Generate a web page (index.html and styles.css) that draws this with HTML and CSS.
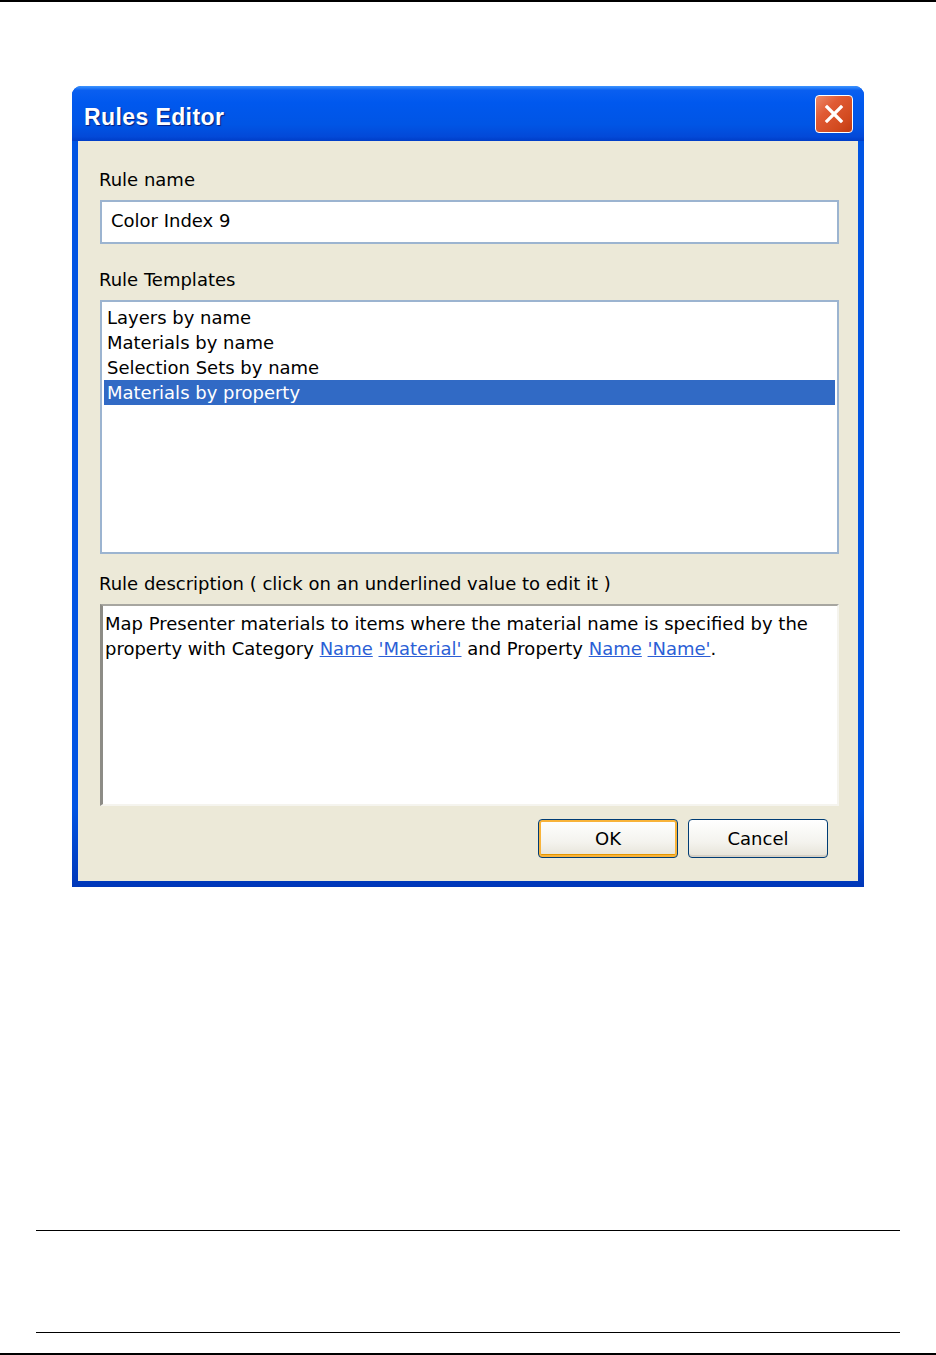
FILE: index.html
```html
<!DOCTYPE html>
<html lang="en">
<head>
    <meta charset="UTF-8">
    <meta name="viewport" content="width=device-width, initial-scale=1.0">
    <title>Rules Editor</title>
    <link rel="stylesheet" href="styles.css">
</head>
<body>
    <div class="page-top"></div>

    <div class="dialog">
        <div class="titlebar">
            <span class="title">Rules Editor</span>
            <button class="close-btn" aria-label="Close">
                <svg width="22" height="22" viewBox="0 0 22 22">
                    <path d="M4 4 L18 18 M18 4 L4 18" stroke="#fff" stroke-width="3.2" stroke-linecap="square"/>
                </svg>
            </button>
        </div>
        <div class="dialog-body">
            <div class="label">Rule name</div>
            <div class="textbox">Color Index 9</div>

            <div class="label label-gap">Rule Templates</div>
            <ul class="listbox">
                <li>Layers by name</li>
                <li>Materials by name</li>
                <li>Selection Sets by name</li>
                <li class="selected">Materials by property</li>
            </ul>

            <div class="label label-gap-small">Rule description ( click on an underlined value to edit it )</div>
            <div class="description">
                Map Presenter materials to items where the material name is specified by the<br>
                property with Category <a href="#">Name</a> <a href="#">'Material'</a> and Property <a href="#">Name</a> <a href="#">'Name'</a>.
            </div>

            <div class="buttons">
                <button class="btn btn-default">OK</button>
                <button class="btn">Cancel</button>
            </div>
        </div>
    </div>

    <div class="page-footer"></div>
    <div class="page-bottom"></div>
</body>
</html>
```

FILE: styles.css
```css
body {
    margin: 0;
    background: #fff;
    font-family: "DejaVu Sans", Verdana, sans-serif;
    height: 1355px;
    overflow: hidden;
}
.page-top {
    height: 2px;
    background: #000;
}
.dialog {
    margin: 84px 0 0 72px;
    width: 792px;
    background: linear-gradient(to bottom, #0054e3 0%, #0054e3 90%, #0037b8 100%);
    border-radius: 9px 9px 0 0;
    overflow: hidden;
}
.titlebar {
    height: 55px;
    display: flex;
    align-items: center;
    justify-content: space-between;
    padding: 0 11px 0 12px;
    background: linear-gradient(to bottom, #3d95ff 0%, #0a5ff0 8%, #0058ee 30%, #0055e5 70%, #0349d8 92%, #003dc7 100%);
}
.title {
    padding-top: 8px;
    color: #fff;
    font-family: "Liberation Sans", Arial, sans-serif;
    font-weight: bold;
    font-size: 23px;
    letter-spacing: 0.4px;
    text-shadow: 1px 1px 1px #0a1e7a;
}
.close-btn {
    width: 38px;
    height: 38px;
    padding: 0;
    border: 1.5px solid #fff;
    border-radius: 4px;
    background: linear-gradient(135deg, #ec8a6a 0%, #e05a34 35%, #d24a1f 75%, #c03a12 100%);
    display: flex;
    align-items: center;
    justify-content: center;
}
.dialog-body {
    margin: 0 6px 6px 6px;
    background: #ece9d8;
    padding: 26px 19px 23px 21px;
    color: #000;
    font-size: 18px;
}
.label {
    line-height: 26px;
    height: 24px;
    white-space: nowrap;
}
.label-gap {
    margin-top: 23px;
}
.label-gap-small {
    margin-top: 17px;
}
.textbox {
    margin: 9px 0 0 1px;
    height: 44px;
    box-sizing: border-box;
    border: 2px solid #9cb4d0;
    background: #fff;
    padding: 0 9px;
    line-height: 38px;
}
.listbox {
    list-style: none;
    margin: 9px 0 0 1px;
    padding: 3px 2px;
    height: 254px;
    box-sizing: border-box;
    border: 2px solid #9cb4d0;
    background: #fff;
}
.listbox li {
    height: 25px;
    line-height: 25px;
    padding-left: 3px;
}
.listbox li.selected {
    background: #316ac5;
    color: #fff;
}
.description {
    margin: 9px 0 0 1px;
    height: 202px;
    box-sizing: border-box;
    border-top: 2px solid #a7a6a0;
    border-left: 3px solid #8d8c86;
    border-right: 2px solid #f5f4ee;
    border-bottom: 2px solid #f5f4ee;
    background: #fff;
    padding: 5px 2px;
    line-height: 25px;
    white-space: nowrap;
}
.description a {
    color: #2c5fd6;
    text-decoration: underline;
}
.buttons {
    display: flex;
    justify-content: flex-end;
    gap: 10px;
    margin-top: 13px;
    padding-right: 11px;
}
.btn {
    width: 140px;
    height: 39px;
    font-family: "DejaVu Sans", Verdana, sans-serif;
    font-size: 18px;
    color: #000;
    border: 1.5px solid #003c74;
    border-radius: 4px;
    background: linear-gradient(to bottom, #ffffff 0%, #f4f3ee 60%, #e6e3d8 100%);
    box-shadow: inset 0 -2px 0 #d6d0c5;
}
.btn-default {
    box-shadow: inset 0 0 0 2px #f8b33a, inset 0 -3px 0 #e59700;
}
.page-footer {
    margin: 343px 0 0 36px;
    width: 864px;
    height: 101px;
    border-top: 1px solid #000;
    border-bottom: 1px solid #000;
}
.page-bottom {
    margin-top: 20px;
    height: 2px;
    background: #000;
}
```
